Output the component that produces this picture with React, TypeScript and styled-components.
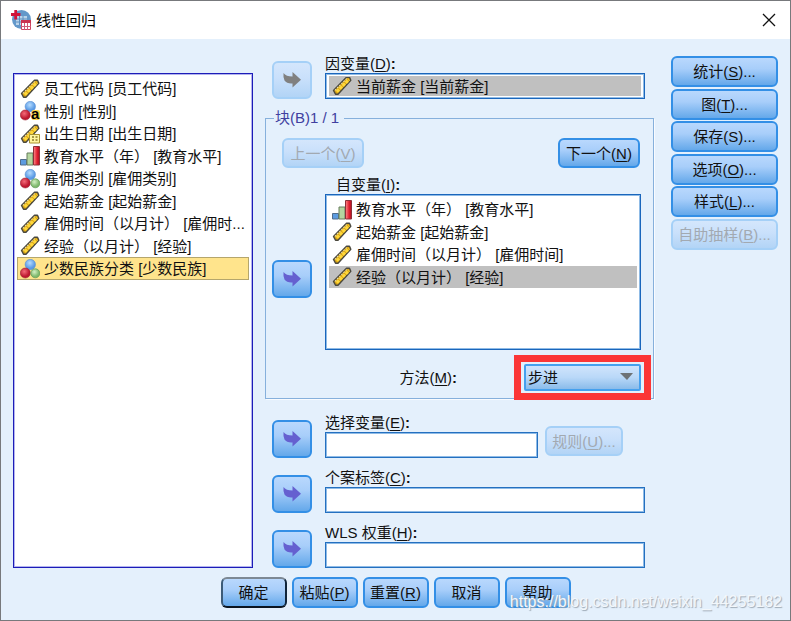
import React, { useId } from "react";
import styled, { createGlobalStyle, css } from "styled-components";

const GlobalStyle = createGlobalStyle`
  *, *::before, *::after { box-sizing: border-box; }
  body {
    margin: 0;
    background: #e4f0fc;
    color: #111;
    font: 15px/19px "Liberation Sans", "Noto Sans CJK SC", sans-serif;
  }
  button, input, select { font: inherit; color: inherit; margin: 0; }
`;

const Dialog = styled.main`
  position: relative;
  display: flex;
  flex-direction: column;
  min-height: 100vh;
  border: 1px solid #77797c;
  background: #e4f0fc;
`;

const TitleBar = styled.header`
  display: flex;
  align-items: center;
  gap: 4px;
  height: 38px;
  padding: 0 13px 0 9px;
  background: #fff;
`;

const Title = styled.h1`
  flex: 1;
  margin: 0;
  font-size: 15px;
  font-weight: 400;
  color: #000;
`;

const CloseButton = styled.button`
  display: flex;
  padding: 0;
  border: 0;
  background: none;
`;

const Content = styled.div`
  display: grid;
  grid-template-columns: 240px minmax(0, 1fr) 112px;
  column-gap: 12px;
  padding: 15px 12px 0;
`;

const listFrame = css`
  margin: 0;
  list-style: none;
  background: #fff;
`;

const SourceList = styled.ul`
  ${listFrame}
  margin-top: 19px;
  padding: 3px;
  border: 1px solid #1c1cb8;
  box-shadow: inset 0 0 0 1px #b4b4ee;
`;

const TargetList = styled.ul`
  ${listFrame}
  height: 156px;
  padding: 3px;
  border: 1px solid #1a66bc;
  box-shadow: inset 0 0 0 1px #8fbbe6;
`;

const SingleTarget = styled.ul`
  ${listFrame}
  height: 26px;
  padding: 2px 3px;
  border: 1px solid #1a66bc;
  box-shadow: inset 0 0 0 1px #8fbbe6;
`;

const VariableRow = styled.li<{ $tone?: "active" | "muted"; $tall?: boolean }>`
  display: flex;
  align-items: center;
  gap: 4px;
  height: ${(p) => (p.$tall ? 23 : 22)}px;
  padding-left: 2px;
  overflow: hidden;
  white-space: nowrap;
  border: 1px solid transparent;
  ${(p) => p.$tone === "active" && css`background: #ffe48c; border-color: #b5a66c;`}
  ${(p) => p.$tone === "muted" && css`background: #c0c0c0;`}
  ${SingleTarget} & { height: 20px; }
  svg { flex: none; }
`;

const Middle = styled.div`
  display: flex;
  flex-direction: column;
  gap: 10px;
`;

const TransferRow = styled.div`
  display: grid;
  grid-template-columns: 40px minmax(0, 1fr);
  column-gap: 13px;
  align-items: end;
  padding: 0 9px 0 7px;
`;

const FieldLabel = styled.label<{ $indent?: boolean }>`
  display: block;
  height: 19px;
  padding-left: ${(p) => (p.$indent ? 11 : 0)}px;
  white-space: nowrap;
  u { text-underline-offset: 2px; }
`;

const TextInput = styled.input`
  display: block;
  width: 100%;
  height: 26px;
  padding: 0 4px;
  border: 1px solid #2470c0;
  border-radius: 0;
  background: #fff;
  box-shadow: inset 0 0 0 1px #8fbbe6;
  outline: 0;
`;

const InputWithButton = styled.div`
  display: grid;
  grid-template-columns: minmax(0, 1fr) 78px;
  column-gap: 7px;
  padding-right: 22px;
  align-items: center;
  button { margin-top: -8px; }
`;

const Button = styled.button<{ $default?: boolean }>`
  height: 30px;
  padding: 0;
  border: 2px solid #338fe6;
  border-radius: 6px;
  background: linear-gradient(#b9d8fd, #a8cefa 40%, #64a8ea);
  white-space: nowrap;
  ${(p) => p.$default && css`
    border-color: #7c8894 #10263c #0b1520 #3c5b78;
  `}
  &:disabled {
    color: #a2a9b1;
    border-color: #a5d0f7;
    background: linear-gradient(#d4e6fc, #c9e0fb 45%, #b2d4f6);
  }
  u { text-underline-offset: 2px; }
`;

const ArrowButton = styled(Button)`
  display: flex;
  align-items: center;
  justify-content: center;
  width: 40px;
  height: 38px;
  color: #6560d0;
  &:disabled { color: #808080; }
`;

const Block = styled.fieldset`
  min-width: 0;
  margin: 0 0 4px;
  padding: 11px 12px 7px 6px;
  border: 1px solid #86b0dc;
  box-shadow: 1px 1px 0 #f8fbff;
`;

const BlockLegend = styled.legend`
  height: 18px;
  margin-left: 2px;
  padding: 0 5px 0 1px;
  line-height: 18px;
  color: #4040a0;
`;

const BlockNav = styled.div`
  display: flex;
  justify-content: space-between;
  padding: 0 1px 0 10px;
  margin-bottom: 7px;
  button { width: 82px; }
`;

const BlockTransfer = styled(TransferRow)`
  padding: 0;
  > button { margin-bottom: 52px; }
`;

const MethodRow = styled.div`
  display: flex;
  align-items: center;
  justify-content: flex-end;
  gap: 67px;
  margin-top: 14px;
`;

const SelectBox = styled.div`
  position: relative;
  width: 117px;
  height: 27px;
  &::after {
    content: "";
    position: absolute;
    inset: -9px -10px;
    border: 7px solid #fb3536;
    pointer-events: none;
  }
  svg { position: absolute; right: 8px; top: 9px; pointer-events: none; }
`;

const Select = styled.select`
  appearance: none;
  width: 100%;
  height: 100%;
  padding: 0 2px;
  border: 2px solid #45a0ee;
  border-radius: 2px;
  background: linear-gradient(#d0e4fc, #b9d8f8 50%, #8abbea);
`;

const Actions = styled.nav`
  display: flex;
  flex-direction: column;
  justify-content: space-between;
  height: 194px;
  margin: 2px 0 0 5px;
  button { height: 31px; }
`;

const Footer = styled.footer`
  display: flex;
  justify-content: center;
  gap: 5px;
  padding: 9px 0 11px;
  button { width: 66px; height: 31px; }
`;

const Watermark = styled.span`
  position: absolute;
  right: 8px;
  bottom: 8px;
  font-size: 16px;
  line-height: 20px;
  color: #f3f7fb;
  text-shadow: 1px 1px 1px #9ca8b4;
  pointer-events: none;
`;

const Ruler = () => (
  <>
    <path d="M1.500 14.500 14.500 1.200h3l1.300 3L6 18.200H3.500z" fill="#d9a514" stroke="#4a483e" strokeWidth="1.400" strokeLinejoin="round" />
    <path d="M3 14.300 14.800 2.500" stroke="#e8dcae" strokeWidth="1.200" strokeDasharray="1.600 1.400" />
    <path d="M4.800 15.800 17 3.500" stroke="#ffd83a" strokeWidth="3" strokeDasharray="3.200 1" />
  </>
);

type IconKind = "scale" | "nominal" | "text" | "date" | "ordinal";

const VariableIcon = ({ kind }: { kind: IconKind }) => (
  <svg width="20" height="20" viewBox="0 0 20 20" fill="none" aria-hidden="true">
    <defs>
      <radialGradient id="ballBlue" cx=".45" cy=".35"><stop stopColor="#b5dcff" /><stop offset="1" stopColor="#5b9be5" /></radialGradient>
      <radialGradient id="ballRed" cx=".4" cy=".35"><stop stopColor="#f46a78" /><stop offset="1" stopColor="#bd1830" /></radialGradient>
      <radialGradient id="ballGreen" cx=".4" cy=".35"><stop stopColor="#d4f0c4" /><stop offset="1" stopColor="#7fb96d" /></radialGradient>
      <linearGradient id="barRed"><stop stopColor="#ff8a8a" /><stop offset=".6" stopColor="#e02030" /><stop offset="1" stopColor="#b01020" /></linearGradient>
    </defs>
    {kind === "scale" && <Ruler />}
    {kind === "date" && (
      <>
        <Ruler />
        <path d="M9.500 10.500h10v8.500h-10z" fill="#fff5a0" stroke="#a89230" />
        <path d="M12 13h2m1.500 0h2M12 16h2m1.500 0h2" stroke="#8c7a28" strokeWidth="1.400" />
      </>
    )}
    {kind === "ordinal" && (
      <>
        <path d="M.5 13.500h6v5.500h-6z" fill="#5c9be0" stroke="#506c8c" />
        <path d="M7 7h6v12H7z" fill="#b5d6a0" stroke="#667c5c" />
        <path d="M13.500 .5h6V19h-6z" fill="url(#barRed)" stroke="#8c3038" />
      </>
    )}
    {(kind === "nominal" || kind === "text") && (
      <>
        <circle cx="10.300" cy="5.500" r="5.200" fill="url(#ballBlue)" stroke="#5a8fd0" strokeWidth=".6" />
        <circle cx="5.300" cy="14" r="5" fill="url(#ballRed)" stroke="#9c2434" strokeWidth=".6" />
      </>
    )}
    {kind === "nominal" && <circle cx="15.300" cy="14.300" r="4.500" fill="url(#ballGreen)" stroke="#5f9a54" strokeWidth=".7" />}
    {kind === "text" && (
      <>
        <rect x="11.500" y="9" width="8.500" height="10" rx="2" fill="#fbd64a" />
        <text x="11" y="18" fontFamily="Liberation Sans" fontWeight="700" fontSize="15" fill="#000">a</text>
      </>
    )}
  </svg>
);

const Arrow = () => (
  <svg width="18" height="16" viewBox="0 0 18 16" aria-hidden="true">
    <path d="M.5 1Q3 4.500 9.500 4.500V0L18 7.700 9.500 15.500V11.500Q4 12 1.500 8.500 0 6 .5 1z" fill="currentColor" />
  </svg>
);

const AppIcon = () => (
  <svg width="22" height="22" viewBox="0 0 22 22" fill="none" aria-hidden="true">
    <circle cx="11.500" cy="10.500" r="9.500" fill="#6398ca" />
    <path d="M6 7h11v9H6z" fill="#b9d3ea" />
    <path d="M6 10h11M6 13h11M9.500 7v9M13 7v9" stroke="#5c8fc0" strokeWidth="1" />
    <path d="M1 5.500h9.500M5.700 1v9.500" stroke="#d0143a" strokeWidth="2.800" />
    <path d="M11.500 11.500h9v9h-9z" fill="#fff" stroke="#cf4460" />
    <path d="M11 12.500h10" stroke="#c93450" strokeWidth="3" />
    <path d="M11 17.500h10M14.500 14v7M17.500 14v7" stroke="#d05c78" strokeWidth="1" />
  </svg>
);

const Mnemonic = ({ text, letter, after = "" }: { text: string; letter: string; after?: string }) => (
  <>
    {text}(<u>{letter}</u>){after === ":" ? <b>:</b> : after}
  </>
);

interface Variable { name: string; kind: IconKind; tone?: "active" | "muted" }

const available: Variable[] = [
  { name: "员工代码 [员工代码]", kind: "scale" },
  { name: "性别 [性别]", kind: "text" },
  { name: "出生日期 [出生日期]", kind: "date" },
  { name: "教育水平（年） [教育水平]", kind: "ordinal" },
  { name: "雇佣类别 [雇佣类别]", kind: "nominal" },
  { name: "起始薪金 [起始薪金]", kind: "scale" },
  { name: "雇佣时间（以月计） [雇佣时...", kind: "scale" },
  { name: "经验（以月计） [经验]", kind: "scale" },
  { name: "少数民族分类 [少数民族]", kind: "nominal", tone: "active" },
];

const independents: Variable[] = [
  { name: "教育水平（年） [教育水平]", kind: "ordinal" },
  { name: "起始薪金 [起始薪金]", kind: "scale" },
  { name: "雇佣时间（以月计） [雇佣时间]", kind: "scale" },
  { name: "经验（以月计） [经验]", kind: "scale", tone: "muted" },
];

const dependents: Variable[] = [{ name: "当前薪金 [当前薪金]", kind: "scale", tone: "muted" }];

const Variables = ({ items }: { items: Variable[] }) => (
  <>
    {items.map((v, i) => (
      <VariableRow key={v.name} role="option" aria-selected={!!v.tone} $tone={v.tone} $tall={i % 2 === 0}>
        <VariableIcon kind={v.kind} />
        <span>{v.name}</span>
      </VariableRow>
    ))}
  </>
);

const Transfer = ({ disabled, label }: { disabled?: boolean; label: string }) => (
  <ArrowButton type="button" disabled={disabled} aria-label={label}><Arrow /></ArrowButton>
);

const InputRow = ({ text, letter, rule }: { text: string; letter: string; rule?: boolean }) => {
  const id = useId();
  const input = <TextInput id={id} type="text" />;
  return (
    <TransferRow>
      <Transfer label={text} />
      <div>
        <FieldLabel htmlFor={id}><Mnemonic text={text} letter={letter} after=":" /></FieldLabel>
        {rule ? (
          <InputWithButton>
            {input}
            <Button type="button" disabled><Mnemonic text="规则" letter="U" after="..." /></Button>
          </InputWithButton>
        ) : input}
      </div>
    </TransferRow>
  );
};

export default function App() {
  return (
    <>
      <GlobalStyle />
      <Dialog lang="zh-CN">
        <TitleBar>
          <AppIcon />
          <Title>线性回归</Title>
          <CloseButton type="button" aria-label="关闭">
            <svg width="16" height="16" viewBox="0 0 16 16"><path d="m2 2 12 12M14 2 2 14" stroke="#111" strokeWidth="1.300" /></svg>
          </CloseButton>
        </TitleBar>
        <Content>
          <SourceList role="listbox" aria-label="变量"><Variables items={available} /></SourceList>
          <Middle>
            <TransferRow>
              <Transfer disabled label="因变量" />
              <div>
                <FieldLabel as="div" id="dependent"><Mnemonic text="因变量" letter="D" after=":" /></FieldLabel>
                <SingleTarget role="listbox" aria-labelledby="dependent"><Variables items={dependents} /></SingleTarget>
              </div>
            </TransferRow>
            <Block>
              <BlockLegend>块(B)1 / 1</BlockLegend>
              <BlockNav>
                <Button type="button" disabled><Mnemonic text="上一个" letter="V" /></Button>
                <Button type="button"><Mnemonic text="下一个" letter="N" /></Button>
              </BlockNav>
              <BlockTransfer>
                <Transfer label="自变量" />
                <div>
                  <FieldLabel as="div" id="independent" $indent><Mnemonic text="自变量" letter="I" after=":" /></FieldLabel>
                  <TargetList role="listbox" aria-labelledby="independent"><Variables items={independents} /></TargetList>
                </div>
              </BlockTransfer>
              <MethodRow>
                <FieldLabel htmlFor="method"><Mnemonic text="方法" letter="M" after=":" /></FieldLabel>
                <SelectBox>
                  <Select id="method" defaultValue="步进"><option>步进</option></Select>
                  <svg width="13" height="8" viewBox="0 0 13 8" aria-hidden="true"><path d="M0 0h13L7 7z" fill="#6d7276" /></svg>
                </SelectBox>
              </MethodRow>
            </Block>
            <InputRow text="选择变量" letter="E" rule />
            <InputRow text="个案标签" letter="C" />
            <InputRow text="WLS 权重" letter="H" />
          </Middle>
          <Actions>
            <Button type="button"><Mnemonic text="统计" letter="S" after="..." /></Button>
            <Button type="button"><Mnemonic text="图" letter="T" after="..." /></Button>
            <Button type="button">保存(S)...</Button>
            <Button type="button"><Mnemonic text="选项" letter="O" after="..." /></Button>
            <Button type="button"><Mnemonic text="样式" letter="L" after="..." /></Button>
            <Button type="button" disabled><Mnemonic text="自助抽样" letter="B" after="..." /></Button>
          </Actions>
        </Content>
        <Footer>
          <Button type="button" $default>确定</Button>
          <Button type="button"><Mnemonic text="粘贴" letter="P" /></Button>
          <Button type="button"><Mnemonic text="重置" letter="R" /></Button>
          <Button type="button">取消</Button>
          <Button type="button">帮助</Button>
        </Footer>
        <Watermark>https://blog.csdn.net/weixin_44255182</Watermark>
      </Dialog>
    </>
  );
}
